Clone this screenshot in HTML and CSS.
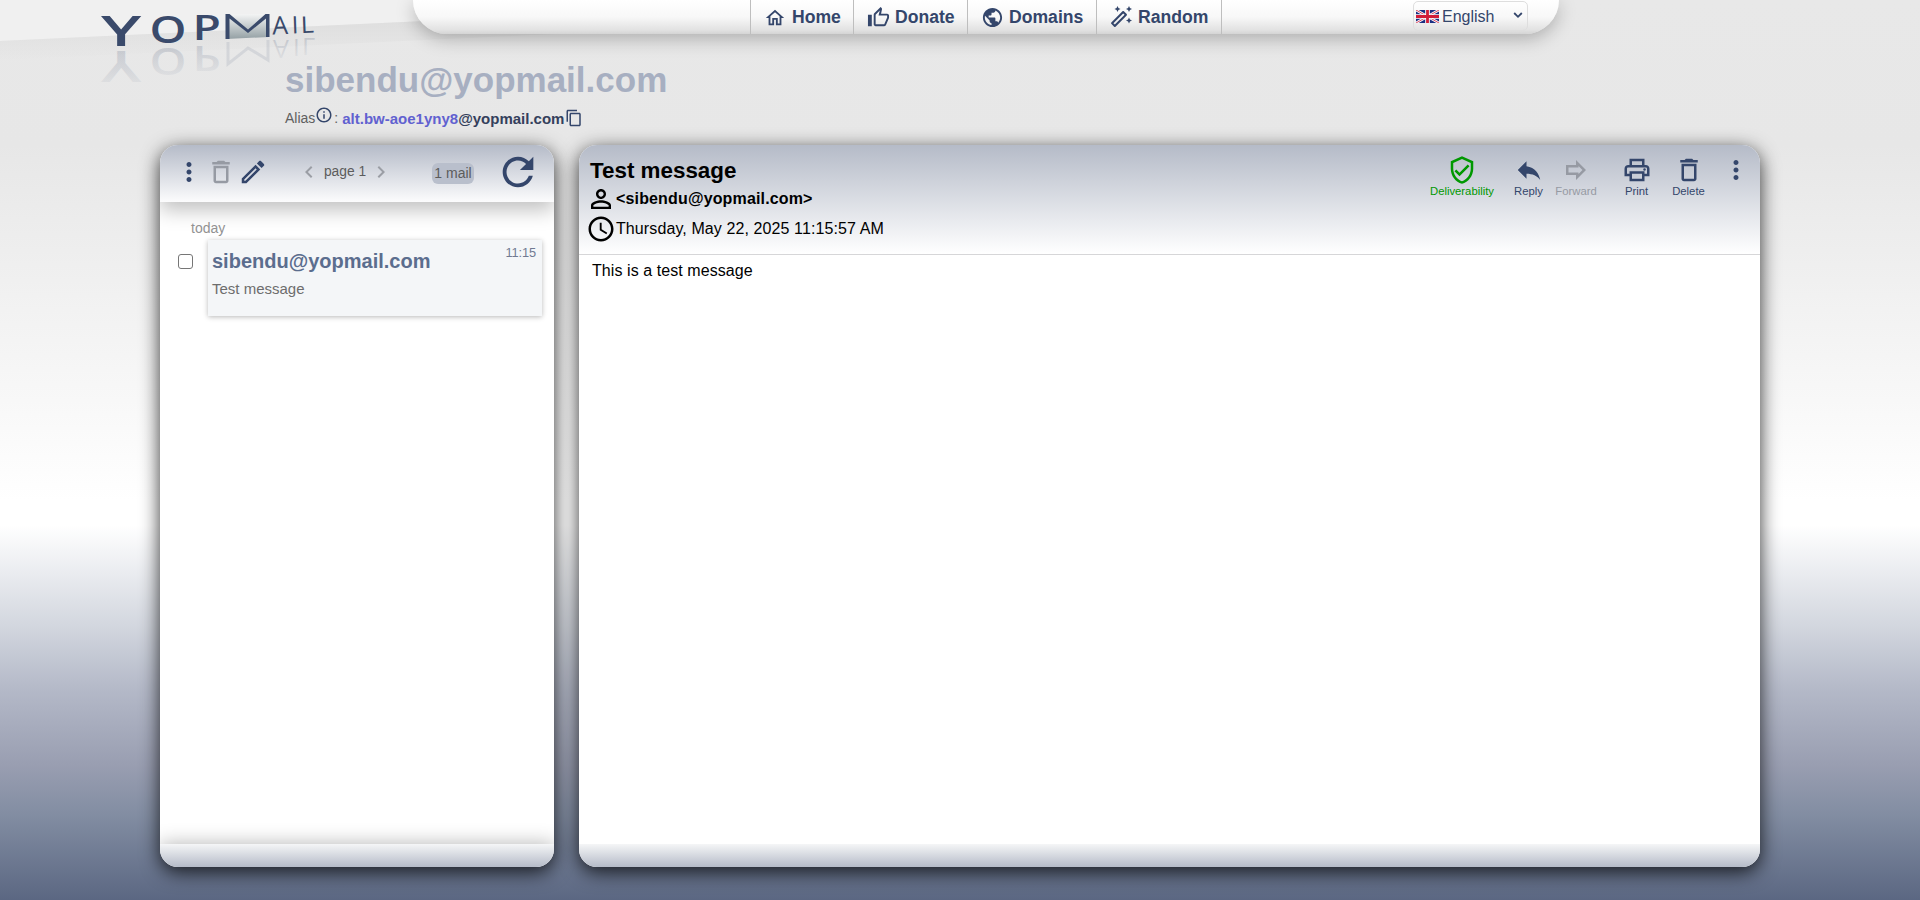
FILE: index.html
```html
<!DOCTYPE html>
<html lang="en">
<head>
<meta charset="utf-8">
<title>YOPmail - Inbox</title>
<link rel="stylesheet" href="styles.css">
</head>
<body>
<svg class="defs" width="0" height="0" aria-hidden="true">
  <symbol id="home" viewBox="0 0 24 24"><path d="M12 5.69l5 4.5V18h-2v-6H9v6H7v-7.81l5-4.5M12 3L2 12h3v8h6v-6h2v6h6v-8h3L12 3z"/></symbol>
  <symbol id="thumb" viewBox="0 0 24 24"><path d="M9 21h9c.83 0 1.54-.5 1.84-1.22l3.02-7.05c.09-.23.14-.47.14-.73v-2c0-1.1-.9-2-2-2h-6.31l.95-4.57.03-.32c0-.41-.17-.79-.44-1.06L14.17 1 7.58 7.59C7.22 7.95 7 8.45 7 9v10c0 1.1.9 2 2 2zM9 9l4.34-4.34L12 10h9v2l-3 7H9V9zM1 9h4v12H1z"/></symbol>
  <symbol id="globe" viewBox="0 0 24 24"><path d="M12 2C6.48 2 2 6.48 2 12s4.48 10 10 10 10-4.48 10-10S17.52 2 12 2zm-1 17.93c-3.95-.49-7-3.85-7-7.93 0-.62.08-1.21.21-1.79L9 15v1c0 1.1.9 2 2 2v1.93zm6.9-2.54c-.26-.81-1-1.39-1.9-1.39h-1v-3c0-.55-.45-1-1-1H8v-2h2c.55 0 1-.45 1-1V7h2c1.1 0 2-.9 2-2v-.41c2.93 1.19 5 4.06 5 7.41 0 2.08-.8 3.97-2.1 5.39z"/></symbol>
  <symbol id="wand" viewBox="0 0 24 24"><path d="M20 7l.94-2.06L23 4l-2.06-.94L20 1l-.94 2.06L17 4l2.06.94zM8.5 7l.94-2.06L11.5 4l-2.06-.94L8.5 1l-.94 2.06L5.5 4l2.06.94zM20 12.5l-.94 2.06-2.06.94 2.06.94.94 2.06.94-2.06L23 15.5l-2.06-.94zM17.71 9.12l-2.83-2.83c-.2-.19-.45-.29-.71-.29-.26 0-.51.1-.71.29L2.29 17.46c-.39.39-.39 1.02 0 1.41l2.83 2.83c.2.2.45.3.71.3s.51-.1.71-.29L17.71 10.54c.39-.39.39-1.03 0-1.42zM14.17 8.42l1.41 1.41-9.75 9.76-1.41-1.41z"/></symbol>
  <symbol id="info" viewBox="0 0 24 24"><path d="M11 7h2v2h-2zm0 4h2v6h-2zm1-9C6.48 2 2 6.48 2 12s4.48 10 10 10 10-4.48 10-10S17.52 2 12 2zm0 18c-4.41 0-8-3.59-8-8s3.59-8 8-8 8 3.59 8 8-3.59 8-8 8z"/></symbol>
  <symbol id="copy" viewBox="0 0 24 24"><path d="M16 1H4c-1.1 0-2 .9-2 2v14h2V3h12V1zm3 4H8c-1.1 0-2 .9-2 2v14c0 1.1.9 2 2 2h11c1.1 0 2-.9 2-2V7c0-1.1-.9-2-2-2zm0 16H8V7h11v14z"/></symbol>
  <symbol id="dots" viewBox="0 0 24 24"><path d="M12 8c1.1 0 2-.9 2-2s-.9-2-2-2-2 .9-2 2 .9 2 2 2zm0 2c-1.1 0-2 .9-2 2s.9 2 2 2 2-.9 2-2-.9-2-2-2zm0 6c-1.1 0-2 .9-2 2s.9 2 2 2 2-.9 2-2-.9-2-2-2z"/></symbol>
  <symbol id="trash" viewBox="0 0 24 24"><path d="M6 19c0 1.1.9 2 2 2h8c1.1 0 2-.9 2-2V7H6v12zM8 9h8v10H8V9zm7.5-5l-1-1h-5l-1 1H5v2h14V4z"/></symbol>
  <symbol id="pencil" viewBox="0 0 24 24"><path d="M14.06 9.02l.92.92L5.92 19H5v-.92l9.06-9.06M17.66 3c-.25 0-.51.1-.7.29l-1.83 1.83 3.75 3.75 1.83-1.83c.39-.39.39-1.02 0-1.41l-2.34-2.34c-.2-.2-.45-.29-.71-.29zm-3.6 3.19L3 17.25V21h3.75L17.81 9.94l-3.75-3.75z"/></symbol>
  <symbol id="left" viewBox="0 0 24 24"><path d="M15.41 7.41L14 6l-6 6 6 6 1.41-1.41L10.83 12z"/></symbol>
  <symbol id="right" viewBox="0 0 24 24"><path d="M10 6L8.59 7.41 13.17 12l-4.58 4.59L10 18l6-6z"/></symbol>
  <symbol id="refresh" viewBox="0 0 24 24"><path d="M17.65 6.35C16.2 4.9 14.21 4 12 4c-4.42 0-7.99 3.58-7.99 8s3.57 8 7.99 8c3.73 0 6.84-2.55 7.73-6h-2.08c-.82 2.33-3.04 4-5.65 4-3.31 0-6-2.69-6-6s2.69-6 6-6c1.66 0 3.14.69 4.22 1.78L13 11h7V4l-2.35 2.35z"/></symbol>
  <symbol id="person" viewBox="0 0 24 24"><path d="M12 5.9c1.16 0 2.1.94 2.1 2.1s-.94 2.1-2.1 2.1S9.9 9.16 9.9 8s.94-2.1 2.1-2.1m0 9c2.97 0 6.1 1.46 6.1 2.1v1.1H5.9V17c0-.64 3.13-2.1 6.1-2.1M12 4C9.79 4 8 5.79 8 8s1.79 4 4 4 4-1.79 4-4-1.79-4-4-4zm0 9c-2.67 0-8 1.34-8 4v3h16v-3c0-2.66-5.33-4-8-4z"/></symbol>
  <symbol id="clock" viewBox="0 0 24 24"><path d="M11.99 2C6.47 2 2 6.48 2 12s4.47 10 9.99 10C17.52 22 22 17.52 22 12S17.52 2 11.99 2zM12 20c-4.42 0-8-3.58-8-8s3.58-8 8-8 8 3.58 8 8-3.58 8-8 8zm.5-13H11v6l5.25 3.15.75-1.23-4.5-2.67z"/></symbol>
  <symbol id="shield" viewBox="0 0 24 24"><path d="M12 1L3 5v6c0 5.55 3.84 10.74 9 12 5.16-1.26 9-6.45 9-12V5l-9-4zm7 10c0 4.52-2.98 8.69-7 9.93-4.02-1.24-7-5.41-7-9.93V6.3l7-3.11 7 3.11V11zm-11.59.59L6 13l4 4 8-8-1.41-1.42L10 14.17z"/></symbol>
  <symbol id="reply" viewBox="0 0 24 24"><path d="M10 9V5l-7 7 7 7v-4.1c5 0 8.5 1.6 11 5.1-1-5-4-10-11-11z"/></symbol>
  <symbol id="forward" viewBox="0 0 24 24"><path d="M14 8.83L17.17 12 14 15.17V14H6v-4h8V8.83M12 4v4H4v8h8v4l8-8-8-8z"/></symbol>
  <symbol id="print" viewBox="0 0 24 24"><path d="M19 8h-1V3H6v5H5c-1.66 0-3 1.34-3 3v6h4v4h12v-4h4v-6c0-1.66-1.34-3-3-3zM8 5h8v3H8V5zm8 12v2H8v-4h8v2zm2-2v-2H6v2H4v-4c0-.55.45-1 1-1h14c.55 0 1 .45 1 1v4h-2z"/><circle cx="18" cy="11.5" r="1"/></symbol>
</svg>

<svg class="backdrop" width="1920" height="90" aria-hidden="true">
  <defs>
    <linearGradient id="fold" x1="0" y1="0" x2="0.04" y2="1">
      <stop offset="0" stop-color="#dcdcdc"/><stop offset="1" stop-color="#dcdcdc" stop-opacity="0"/>
    </linearGradient>
  </defs>
  <path d="M0 0H640V11L0 41Z" fill="#f0f0f0"/>
  <path d="M0 41L640 11V30L0 60Z" fill="url(#fold)"/>
</svg>

<header class="top">
  <svg class="logo" width="413" height="50" viewBox="0 0 413 50">
    <defs>
      <linearGradient id="env" x1="0" y1="0" x2="0" y2="1">
        <stop offset="0" stop-color="#f4f5f5"/><stop offset="1" stop-color="#94a0a4"/>
      </linearGradient>
      <linearGradient id="fade" x1="0" y1="0" x2="0" y2="1">
        <stop offset="0.2" stop-color="#3a4a6b" stop-opacity="0.05"/><stop offset="0.8" stop-color="#3a4a6b" stop-opacity="0.18"/>
      </linearGradient>
    </defs>
    <g class="logo-text">
      <text class="wide" transform="translate(101 45.500) scale(1.66 1)" font-size="41">Y</text>
      <text class="wide" transform="translate(149.500 42.500) scale(1.270 1)" font-size="37">O</text>
      <text class="wide" transform="translate(192.500 40) scale(1.380 1)" font-size="33.500">P</text>
      <text class="thin" transform="translate(272.500 34.500) rotate(-2)" font-size="25">A</text>
      <text class="thin" transform="translate(292 33.500) rotate(-2)" font-size="24">I</text>
      <text class="thin" transform="translate(301 33) rotate(-2) scale(1.100 1)" font-size="23">L</text>
    </g>
    <path d="M226 14.500L269 14V37L226 39Z" fill="url(#env)"/>
    <path d="M225.500 14H229.500L248 29.500L265.500 14H269.500V37H266V18.500L248 33L229.500 18.500V39H225.500Z" fill="#3a4a6b"/>
    <g fill="url(#fade)" aria-hidden="true">
      <text class="wide" transform="translate(101 51) scale(1.66 -1.05)" font-size="41">Y</text>
      <text class="wide" transform="translate(149.500 48) scale(1.270 -1)" font-size="37">O</text>
      <text class="wide" transform="translate(192.500 46) scale(1.380 -1)" font-size="33.500">P</text>
      <text class="thin" transform="translate(273 40) scale(1 -1)" font-size="25">A</text>
      <text class="thin" transform="translate(293 39) scale(1 -1)" font-size="24">I</text>
      <text class="thin" transform="translate(302 38) scale(1.100 -1)" font-size="23">L</text>
    </g>
    <path d="M228 42V64L248 48L268 60V40" fill="none" stroke="#3a4a6b" stroke-opacity="0.11" stroke-width="3"/>
  </svg>
  <div class="tab">
    <nav class="nav">
      <a class="nav-item home"><svg class="ico"><use href="#home"/></svg>Home</a>
      <a class="nav-item donate"><svg class="ico"><use href="#thumb"/></svg>Donate</a>
      <a class="nav-item domains"><svg class="ico"><use href="#globe"/></svg>Domains</a>
      <a class="nav-item random"><svg class="ico"><use href="#wand"/></svg>Random</a>
    </nav>
    <div class="lang">
      <svg class="flag" viewBox="0 0 23 13">
        <rect width="23" height="13" fill="#1c2f82"/>
        <path d="M0 0L23 13M23 0L0 13" stroke="#fff" stroke-width="2.600"/>
        <path d="M0 0L23 13M23 0L0 13" stroke="#d01c38" stroke-width="0.800"/>
        <path d="M11.500 0V13M0 6.500H23" stroke="#fff" stroke-width="4.600"/>
        <path d="M11.500 0V13M0 6.500H23" stroke="#d01c38" stroke-width="2.800"/>
      </svg>
      <span class="lang-name">English</span>
      <svg class="caret" viewBox="0 0 10 10"><path d="M1.200 3L5 6.800L8.800 3" fill="none" stroke="#34466b" stroke-width="1.800"/></svg>
    </div>
  </div>
  <div class="account">
    <div class="address">sibendu@yopmail.com</div>
    <div class="alias"><span>Alias</span><svg class="info"><use href="#info"/></svg><span class="colon">:</span><b><span class="alt">alt.bw-aoe1yny8</span>@yopmail.com</b><svg class="copy"><use href="#copy"/></svg></div>
  </div>
</header>

<main class="panels">
  <section class="panel inbox">
    <div class="toolbar">
      <svg class="act"><use href="#dots"/></svg>
      <svg class="act dim"><use href="#trash"/></svg>
      <svg class="act"><use href="#pencil"/></svg>
      <div class="pager"><svg class="chev"><use href="#left"/></svg><span>page 1</span><svg class="chev"><use href="#right"/></svg></div>
      <span class="count">1 mail</span>
      <svg class="refresh"><use href="#refresh"/></svg>
    </div>
    <div class="list">
      <div class="day">today</div>
      <div class="row">
        <span class="check"></span>
        <div class="mail">
          <div class="mail-head"><b class="from">sibendu@yopmail.com</b><span class="time">11:15</span></div>
          <div class="subject">Test message</div>
        </div>
      </div>
    </div>
    <div class="foot"></div>
  </section>

  <section class="panel message">
    <div class="msg-head">
      <div class="meta">
        <h1 class="title">Test message</h1>
        <div class="line sender"><svg class="act"><use href="#person"/></svg><b>&lt;sibendu@yopmail.com&gt;</b></div>
        <div class="line date"><svg class="act"><use href="#clock"/></svg><span>Thursday, May 22, 2025 11:15:57 AM</span></div>
      </div>
      <div class="actions">
        <div class="action deliver"><svg class="act"><use href="#shield"/></svg>Deliverability</div>
        <div class="action reply"><svg class="act"><use href="#reply"/></svg>Reply</div>
        <div class="action forward"><svg class="act"><use href="#forward"/></svg>Forward</div>
        <div class="action print"><svg class="act"><use href="#print"/></svg>Print</div>
        <div class="action delete"><svg class="act"><use href="#trash"/></svg>Delete</div>
        <div class="action more"><svg class="act"><use href="#dots"/></svg></div>
      </div>
    </div>
    <div class="body">This is a test message</div>
    <div class="foot"></div>
  </section>
</main>
</body>
</html>
```

FILE: styles.css
```css
* { box-sizing: border-box; }
body {
  margin: 0;
  height: 900px;
  overflow: hidden;
  font-family: "Liberation Sans", Arial, sans-serif;
  font-size: 16px;
  color: #000;
  background: linear-gradient(#e8e8e8 0, #e7e7e7 145px, #f8f8f8 400px, #fff 500px, #fff 525px, #d3d7df 625px, #b4b9c8 689px, #999eb1 765px, #828da2 815px, #5b6782 900px);
}
svg { fill: currentColor; flex: none; display: block; }
.defs { position: absolute; }
.backdrop { position: absolute; left: 0; top: 0; z-index: -1; }

/* Top area */
.top {
  height: 145px;
  display: grid;
  grid-template-columns: 413px 1146px;
  grid-template-rows: 50px 95px;
}
.logo { overflow: visible; }
.logo-text { fill: #3a4a6b; }
.wide { font-family: "Open Sans", sans-serif; font-weight: 600; }
.thin { font-family: "Open Sans", sans-serif; font-weight: 500; }
.tab {
  height: 34px;
  display: flex;
  align-items: flex-start;
  padding-left: 337px;
  border-radius: 0 0 34px 34px;
  background: linear-gradient(#fff 0, #f8f8f8 50%, #e2e2e2 88%, #d4d4d4 100%);
  box-shadow: 0 5px 18px 0 rgba(0, 0, 0, .25);
  color: #34466b;
}
.nav { display: flex; height: 34px; border-right: 1px solid #bebebe; }
.nav-item {
  display: flex;
  align-items: center;
  padding: 1px 0 0 12px;
  gap: 5px;
  border-left: 1px solid #bebebe;
  font-size: 17.6px;
  font-weight: bold;
}
.ico { width: 24px; height: 24px; margin-bottom: 1px; }
.home { width: 103px; }
.home .ico { width: 22px; height: 22px; margin: 0 1px; }
.donate { width: 114px; }
.donate .ico, .domains .ico { width: 23px; height: 23px; margin-left: 1px; }
.domains { width: 129px; }
.random { width: 125px; }
.lang {
  display: flex;
  align-items: center;
  width: 115px;
  height: 30px;
  margin: 1px 0 0 191px;
  padding: 1px 3px 0 2px;
  border: 1px solid #dedede;
  border-radius: 5px;
}
.flag { width: 23px; height: 13px; margin-bottom: 1px; }
.lang-name { margin-left: 3px; }
.caret { width: 10px; height: 10px; margin: 0 1px 3px auto; }
.account { grid-column: 1 / -1; padding-left: 285px; }
.address { height: 55px; line-height: 60px; font-size: 35px; font-weight: bold; color: #a7afc1; }
.alias { display: flex; align-items: center; height: 26px; font-size: 14px; color: #606060; }
.alias b { font-size: 15px; color: #34405c; }
.alias .alt { color: #6161d0; }
.info { width: 18px; height: 18px; margin: -7px 0 0 0; color: #34466b; }
.colon { margin: 0 4px 0 1px; }
.copy { width: 18px; height: 18px; margin-left: 1px; color: #34466b; }

/* Panels */
.panels { display: flex; gap: 25px; padding-left: 160px; height: 722px; }
.panel {
  display: flex;
  flex-direction: column;
  overflow: hidden;
  border-radius: 18px;
  background: #fff;
  box-shadow: 0 5px 19px rgba(0, 0, 0, .8);
}
.inbox { width: 394px; }
.message { width: 1181px; }
.act { width: 30px; height: 30px; }
.toolbar {
  display: flex;
  align-items: center;
  height: 57px;
  flex: none;
  padding: 0 12px 4px 14px;
  background: linear-gradient(#b5bbc8, #fcfcfd);
  box-shadow: 0 8px 20px 0 rgba(0, 0, 0, .25);
  color: #34466b;
}
.toolbar .act + .act { margin-left: 2px; }
.toolbar .dim { color: #969aa3; }
.pager { display: flex; align-items: center; margin-left: 29px; font-size: 13.8px; color: #5c5c5c; }
.chev { width: 24px; height: 24px; color: #9b9ea5; }
.pager span { width: 48px; text-align: center; }
.count {
  width: 42px;
  height: 21px;
  margin: 4px 0 0 39px;
  border-radius: 6px;
  background: #b9bfcc;
  font-size: 14px;
  line-height: 21px;
  text-align: center;
  color: #5c5c5c;
}
.refresh { width: 46px; height: 46px; margin-left: 21px; }
.list { flex: 1; padding: 18px 12px 0 15px; }
.day { height: 20px; padding-left: 16px; line-height: 16px; font-size: 14px; color: #929292; }
.row { display: flex; }
.check { width: 15px; height: 15px; margin: 14px 15px 0 3px; border: 1.5px solid #767676; border-radius: 3px; flex: none; }
.mail { flex: 1; height: 76px; padding: 10px 6px 0 4px; background: #f4f6f8; box-shadow: 0 1px 5px rgba(0, 0, 0, .28); }
.mail-head { display: flex; justify-content: space-between; height: 29px; }
.from { font-size: 20px; line-height: 23px; color: #5b6d8e; }
.time { font-size: 12.8px; line-height: 6px; letter-spacing: -.1px; color: #707a92; }
.subject { font-size: 15px; line-height: 19px; color: #6d6d6d; }
.foot { flex: none; height: 23px; background: linear-gradient(#f5f6f7, #b5bbc8); }
.inbox .foot { box-shadow: 0 0 20px 0 rgba(0, 0, 0, .3); }

/* Message */
.msg-head {
  display: flex;
  justify-content: space-between;
  height: 110px;
  flex: none;
  border-bottom: 1px solid #d6d6d8;
  background: linear-gradient(#b5bbc8, #fff);
}
.meta { padding: 12px 0 0 7px; }
.title { margin: 0 0 0 4px; height: 27px; font-size: 22.4px; line-height: 27px; }
.line { display: flex; align-items: center; height: 30px; }
.sender b { letter-spacing: .15px; }
.date span { letter-spacing: .1px; }
.actions { display: flex; padding: 10px 9px 0 0; color: #34466b; }
.action { display: flex; flex-direction: column; align-items: center; font-size: 11.3px; line-height: 13px; }
.deliver { width: 66px; margin-right: 13px; color: #009800; }
.reply { width: 41px; }
.forward { width: 54px; margin-right: 9px; color: #969aa3; }
.print { width: 49px; }
.delete { width: 55px; margin-right: 4px; }
.more { width: 31px; }
.body { flex: 1; padding: 6px 12px 6px 13px; line-height: 20px; letter-spacing: .07px; }
```
